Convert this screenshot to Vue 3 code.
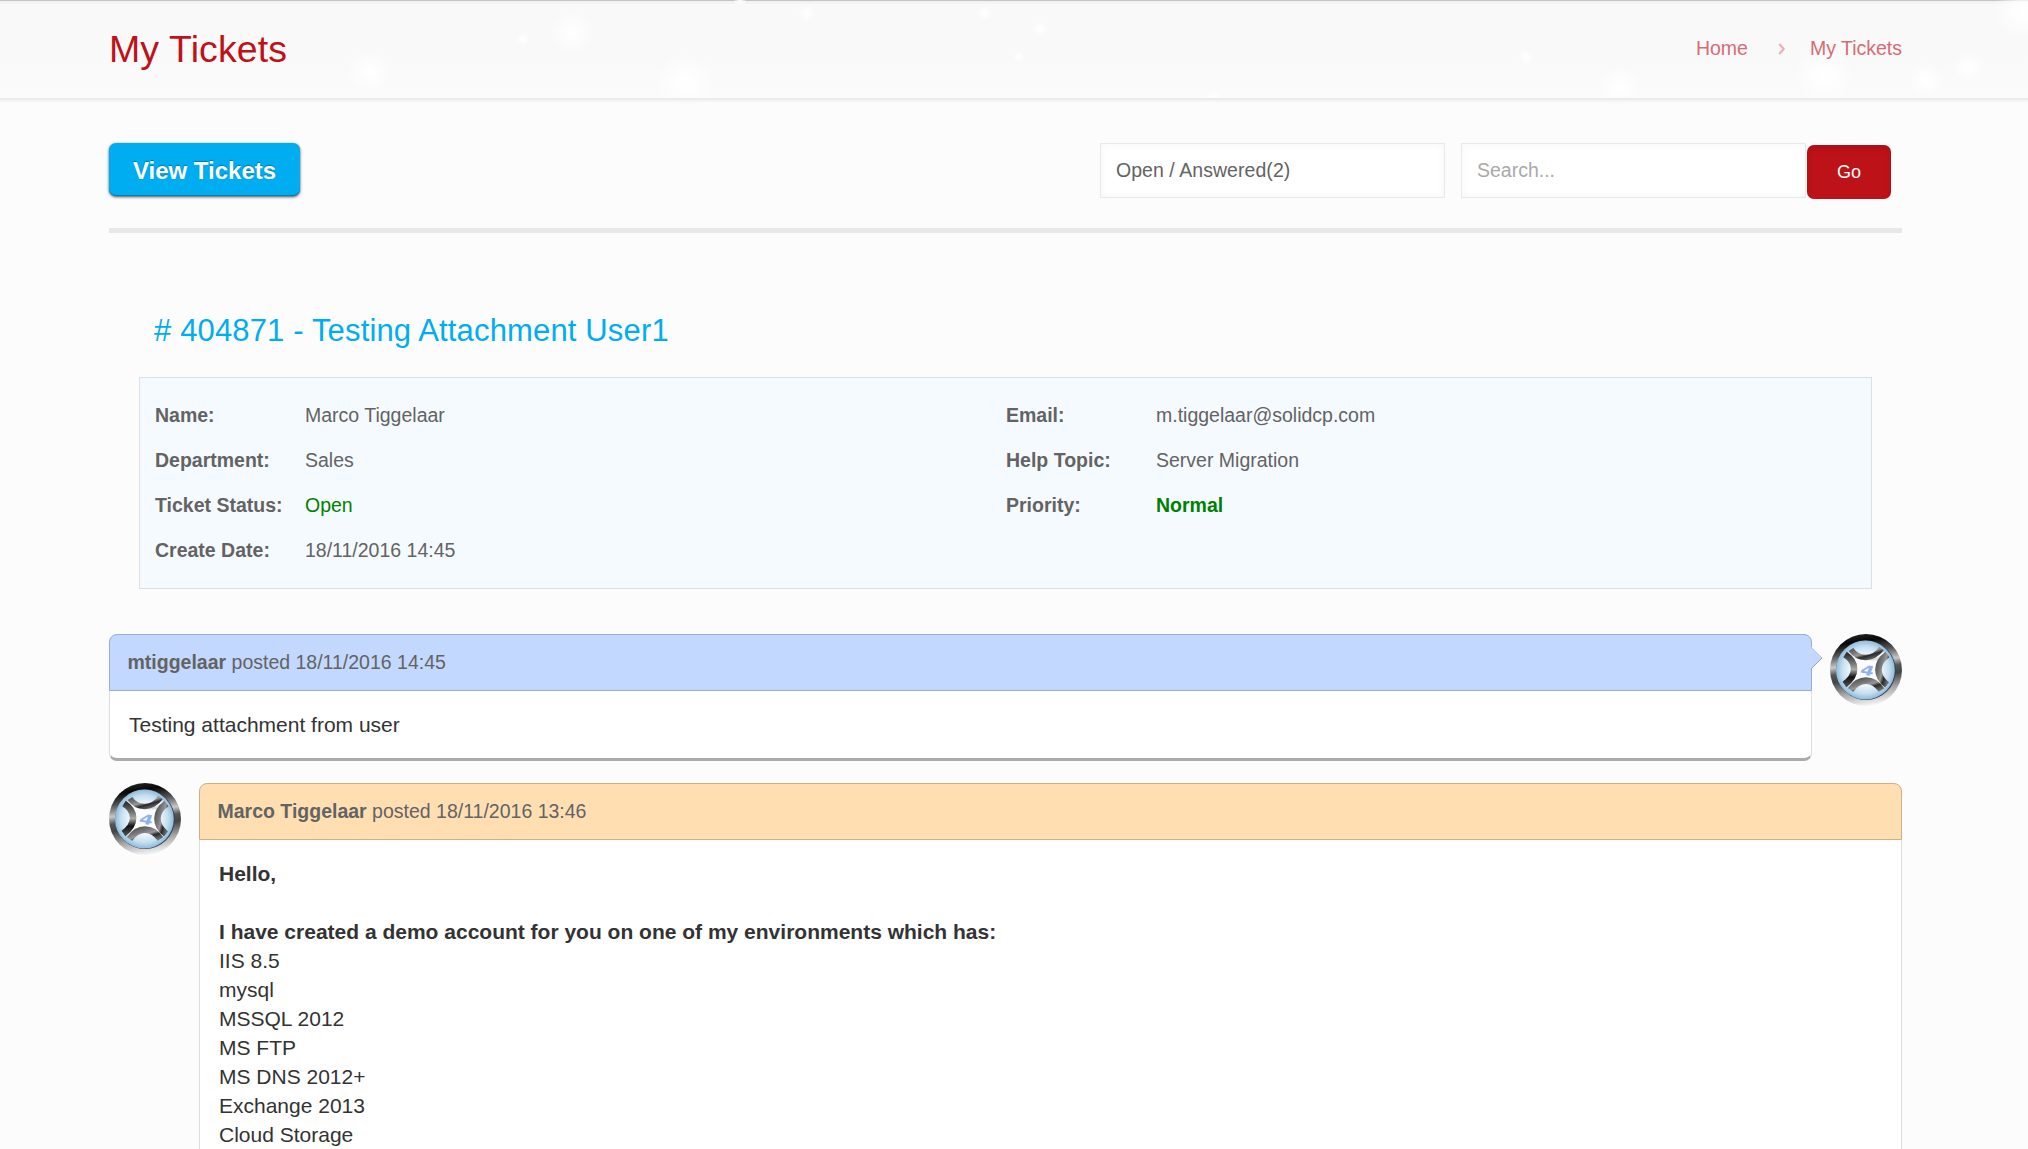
<script setup>
const sparks = [
  [369, 71, 22], [572, 33, 22], [686, 82, 30], [807, 13, 9], [985, 13, 8], [523, 39, 7],
  [740, 0, 7], [1040, 29, 8], [1019, 57, 6], [1526, 57, 8], [1619, 88, 22], [1824, 75, 30],
  [1926, 80, 18], [1968, 67, 16], [2023, 10, 30], [1213, 97, 8],
]

const details = [
  [
    { label: 'Name:', value: 'Marco Tiggelaar' },
    { label: 'Department:', value: 'Sales' },
    { label: 'Ticket Status:', value: 'Open', tone: 'green' },
    { label: 'Create Date:', value: '18/11/2016 14:45' },
  ],
  [
    { label: 'Email:', value: 'm.tiggelaar@solidcp.com' },
    { label: 'Help Topic:', value: 'Server Migration' },
    { label: 'Priority:', value: 'Normal', tone: 'green strong' },
  ],
]

const posts = [
  {
    kind: 'user',
    author: 'mtiggelaar',
    date: '18/11/2016 14:45',
    lines: [{ text: 'Testing attachment from user' }],
  },
  {
    kind: 'staff',
    author: 'Marco Tiggelaar',
    date: '18/11/2016 13:46',
    lines: [
      { text: 'Hello,', bold: true },
      { text: '' },
      { text: 'I have created a demo account for you on one of my environments which has:', bold: true },
      { text: 'IIS 8.5' },
      { text: 'mysql' },
      { text: 'MSSQL 2012' },
      { text: 'MS FTP' },
      { text: 'MS DNS 2012+' },
      { text: 'Exchange 2013' },
      { text: 'Cloud Storage' },
      { text: '' },
    ],
  },
]
</script>

<template>
  <div class="page">
    <header class="banner">
      <svg class="sparks" width="2028" height="98" viewBox="0 0 2028 98" aria-hidden="true">
        <defs>
          <radialGradient id="spark">
            <stop offset="0" stop-color="#fff" />
            <stop offset=".35" stop-color="#fff" stop-opacity=".7" />
            <stop offset="1" stop-color="#fff" stop-opacity="0" />
          </radialGradient>
        </defs>
        <circle v-for="(s, i) in sparks" :key="i" :cx="s[0]" :cy="s[1]" :r="s[2]" fill="url(#spark)" />
      </svg>
      <div class="wrap banner-row">
        <h1>My Tickets</h1>
        <nav class="crumbs">
          <a>Home</a>
          <svg width="8" height="14" viewBox="0 0 8 14" fill="none" stroke="#e8b0b4" stroke-width="2">
            <path d="M1.2 2 5.8 7 1.2 12" />
          </svg>
          <a>My Tickets</a>
        </nav>
      </div>
    </header>

    <main class="wrap">
      <div class="toolbar">
        <button class="view">View Tickets</button>
        <form class="filters" @submit.prevent>
          <div class="field select">Open / Answered(2)</div>
          <input class="field" type="text" placeholder="Search..." />
          <button class="go">Go</button>
        </form>
      </div>

      <h2># 404871 - Testing Attachment User1</h2>

      <section class="details">
        <dl v-for="(col, i) in details" :key="i">
          <div v-for="d in col" :key="d.label" class="detail">
            <dt>{{ d.label }}</dt>
            <dd :class="d.tone">{{ d.value }}</dd>
          </div>
        </dl>
      </section>

      <article v-for="p in posts" :key="p.author" class="post" :class="p.kind">
        <div class="bubble">
          <div class="post-head">
            <b>{{ p.author }}</b> posted {{ p.date }}
          </div>
          <div class="post-body">
            <p v-for="(l, i) in p.lines" :key="i" :class="{ strong: l.bold }">{{ l.text }}</p>
          </div>
          <svg v-if="p.kind === 'user'" class="tail" width="12" height="24" viewBox="0 0 12 24">
            <path d="M0 1 11 12 0 23Z" fill="#c3d8ff" />
            <path d="M0 1 11 12" stroke="#b3c6ea" fill="none" />
            <path d="M11 12 0 23" stroke="#91a7cd" fill="none" />
          </svg>
        </div>
        <svg class="avatar" width="72" height="72" viewBox="0 0 72 72">
          <defs>
            <linearGradient :id="'rim' + p.kind" x1=".42" y1="0" x2=".58" y2="1">
              <stop offset="0" stop-color="#222" />
              <stop offset=".1" stop-color="#080808" />
              <stop offset=".25" stop-color="#555" />
              <stop offset=".4" stop-color="#c8c8c8" />
              <stop offset=".5" stop-color="#555" />
              <stop offset=".6" stop-color="#444" />
              <stop offset=".78" stop-color="#a4a4a4" />
              <stop offset="1" stop-color="#fafafa" />
            </linearGradient>
            <radialGradient :id="'disc' + p.kind">
              <stop offset="0" stop-color="#fff" />
              <stop offset=".5" stop-color="#f2f8fc" />
              <stop offset=".8" stop-color="#c5dff0" />
              <stop offset="1" stop-color="#8fbbdc" />
            </radialGradient>
            <linearGradient :id="'steel' + p.kind" x1="0" y1="0" x2="1" y2="1">
              <stop offset="0" stop-color="#555" />
              <stop offset=".3" stop-color="#777" />
              <stop offset=".5" stop-color="#999" />
              <stop offset=".68" stop-color="#2a2a2a" />
              <stop offset="1" stop-color="#777" />
            </linearGradient>
            <linearGradient :id="'left' + p.kind" x1="0" y1="0" x2="0" y2="1">
              <stop offset="0" stop-color="#333" />
              <stop offset=".3" stop-color="#777" />
              <stop offset=".5" stop-color="#aaa" />
              <stop offset=".75" stop-color="#111" />
              <stop offset="1" stop-color="#444" />
            </linearGradient>
          </defs>
          <circle cx="36" cy="36" r="36" :fill="`url(#rim${p.kind})`" />
          <circle cx="36" cy="36.3" r="29.8" fill="#345" />
          <circle cx="35.4" cy="36" r="29.4" :fill="`url(#disc${p.kind})`" />
          <path d="M19 19Q36 31 54 18 44 36 55 54 36 42 18 55 28 36 19 19Z" fill="#fdfdff" />
          <path d="M24 23Q37 31 53 20L49 26Q37 28 24 23Z" fill="#dedede" />
          <g fill="none" stroke-width="6.6">
            <path d="M15 20.5C27 28 27.5 41 14.5 50.5" :stroke="`url(#left${p.kind})`" />
            <path d="M57.5 20.5C45.5 29 45.5 42 57 51" :stroke="`url(#steel${p.kind})`" />
            <path d="M21 15.5C28 26 43 26.5 51.5 14.5" :stroke="`url(#steel${p.kind})`" stroke-width="5.6" />
            <path d="M20.5 56C29 43.5 43 43.5 51.5 56" :stroke="`url(#steel${p.kind})`" />
          </g>
          <text text-anchor="middle" transform="translate(35.8 41.2) rotate(10) skewX(-10) scale(1.4 1)" class="digit">4</text>
        </svg>
      </article>
    </main>
  </div>
</template>

<style>
body {
  margin: 0;
  background: #fcfcfc;
}
</style>

<style scoped>
.page {
  height: 1149px;
  overflow: hidden;
  background: #fcfcfc;
  color: #636363;
  font: 19.5px/1.5 "Liberation Sans", Arial, sans-serif;
}
.wrap {
  width: 1793px;
  margin: 0 auto 0 109px;
}
.banner {
  position: relative;
  height: 98px;
  background: linear-gradient(#c4c4c6 0 1px, #f0f0f0 1px, #f9f9f9 5px, #f9f9f9 60px, #fbfbfb);
  box-shadow: 0 2px 0 #ebebeb, 0 3px 3px #eee;
}
.sparks {
  position: absolute;
  inset: 0;
}
.banner-row {
  position: relative;
  display: flex;
  justify-content: space-between;
  align-items: center;
  height: 98px;
}
h1 {
  margin: 0;
  font-size: 37.5px;
  font-weight: 400;
  line-height: 44px;
  letter-spacing: .1px;
  color: #be1219;
}
.crumbs {
  display: flex;
  align-items: center;
  color: #d66d73;
}
.crumbs svg {
  margin: 0 24px 0 30px;
}
.toolbar {
  display: flex;
  justify-content: space-between;
  align-items: flex-start;
  height: 85px;
  padding-top: 45px;
  border-bottom: 5px solid #e8e8e8;
}
button {
  border: 0;
  padding: 0;
  color: #fff;
  font-family: inherit;
}
.view {
  width: 191px;
  height: 53px;
  padding-top: 2px;
  border-radius: 7px;
  background: #00adf1;
  box-shadow: inset 0 -1px 0 rgba(0, 0, 0, .28), 0 1px 3px rgba(0, 0, 0, .7);
  font-size: 24px;
  font-weight: 700;
  text-shadow: 0 -1px 1px rgba(0, 0, 0, .3);
}
.filters {
  display: flex;
  padding-right: 11px;
}
.field {
  box-sizing: border-box;
  width: 345px;
  height: 55px;
  margin-right: 16px;
  padding: 0 15px;
  border: 1px solid #e9e9e9;
  border-radius: 0;
  background: #fff;
  box-shadow: inset 0 0 8px rgba(0, 0, 0, .04);
  color: #636363;
  font: 19.5px/53px "Liberation Sans", Arial, sans-serif;
}
.select {
  letter-spacing: .05px;
}
input.field {
  margin-right: 1px;
}
.field::placeholder {
  color: #a9a9a9;
  opacity: 1;
}
.go {
  width: 84px;
  height: 54px;
  margin-top: 2px;
  border-radius: 7px;
  background: #be1219;
  box-shadow: inset 0 4px 6px rgba(0, 0, 0, .1);
  font-size: 18px;
}
h2 {
  margin: 78px 0 0 45px;
  font-size: 31px;
  font-weight: 400;
  line-height: 40px;
  letter-spacing: .15px;
  color: #00adf1;
}
.details {
  display: grid;
  grid-template-columns: 851px 1fr;
  box-sizing: border-box;
  height: 212px;
  margin: 26px 30px 45px;
  padding: 15px;
  border: 1px solid #dcdfe4;
  background: #f5faff;
}
dl,
dd,
p {
  margin: 0;
}
.detail {
  display: flex;
  height: 45px;
  line-height: 45px;
}
dt {
  width: 150px;
  font-weight: 700;
}
.green {
  color: #008000;
}
.strong {
  font-weight: 700;
}
.post {
  display: flex;
  justify-content: space-between;
  align-items: flex-start;
  margin-bottom: 22px;
}
.staff {
  flex-direction: row-reverse;
}
.bubble {
  position: relative;
  width: 1703px;
}
.post-head {
  box-sizing: border-box;
  height: 57px;
  padding-left: 17.5px;
  border: 1px solid #97acd4;
  border-radius: 8px 8px 0 0;
  background: #c3d8ff;
  line-height: 54px;
}
.staff .post-head {
  border-color: #cbb18b;
  background: #ffdfb2;
}
.post-body {
  padding: 19px;
  border: 1px solid #ddd;
  border-top: 0;
  border-bottom: 3px solid #aaa;
  border-radius: 0 0 8px 8px;
  background: #fff;
  color: #333;
  font-size: 21px;
  line-height: 29px;
}
.post-body p {
  height: 29px;
}
.tail {
  position: absolute;
  left: 1702px;
  top: 12px;
}
.avatar {
  display: block;
}
.digit {
  font: 700 14px "DejaVu Sans", sans-serif;
  fill: #8fb2f0;
}
</style>
